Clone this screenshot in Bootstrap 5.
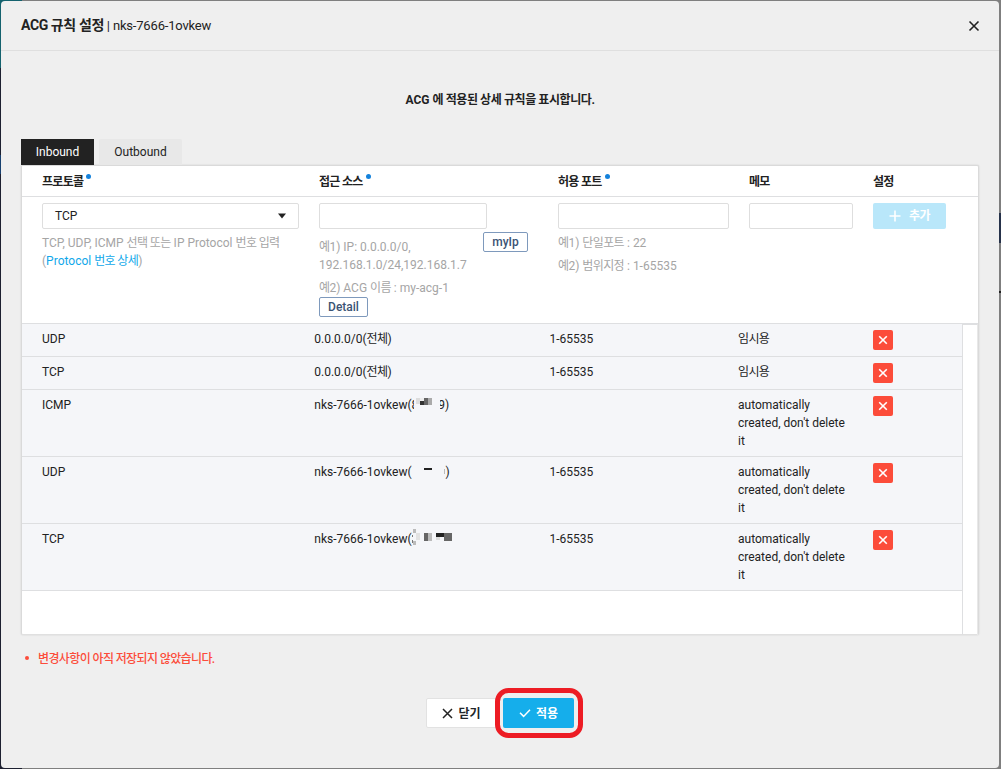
<!DOCTYPE html>
<html lang="ko">
<head>
<meta charset="utf-8">
<title>ACG 규칙 설정</title>
<link href="https://cdn.jsdelivr.net/npm/bootstrap@5.3.0/dist/css/bootstrap.min.css" rel="stylesheet">
<style>
body{font-family:Roboto,"Noto Sans CJK KR",sans-serif;font-size:12px;line-height:18px;color:#222;width:1001px;height:769px;overflow:hidden;
background:linear-gradient(#0000,#0000),linear-gradient(90deg,#14626e 22px,#7f7f7f 22px) 0 0/100% 1px no-repeat,linear-gradient(#14626e 68px,#1d2030 68px,#1d2030 155px,#17406f 155px,#17406f 174px,#1d2030 174px) 0 0/22px 100% no-repeat,linear-gradient(#7f7f7f 213px,#26324a 213px,#26324a 243px,#7f7f7f 243px,#7f7f7f 291px,#222 291px,#222 293px,#7f7f7f 293px) #7f7f7f}
.dialog-box{width:998px;height:767px;margin:1px;background:#efefef;border-radius:4px}
.dialog-head{height:50px;padding:0 18px 0 20px;border-bottom:1px solid #dfdfdf}
.dialog-head strong{font-size:14px;letter-spacing:-.4px}
.dialog-head span{font-size:13px;letter-spacing:-.18px}
.ko{letter-spacing:-.62px}
.intro{margin-top:40px;font-weight:700}
.intro .ko{letter-spacing:-.42px}
.tab-strip{margin:30px 0 0 20px;gap:5px}
.tab-strip .nav-link{height:26px;line-height:26px;padding:0;border-radius:2px 2px 0 0;text-align:center;color:#222;background:#e8e8e8;width:83px}
.tab-strip .nav-link.active{background:#222;color:#fff;width:73px;border-radius:0}
.panel{margin:0 20px;width:958px;height:470px;border:1px solid #dadada;border-bottom-color:#e0e0e0;box-shadow:0 0 2px #0002;border-radius:2px}
.cols{display:grid;grid-template-columns:277px 239px 191px 124px auto;padding-left:20px;border-bottom:1px solid #dedfe1}
.cols.caption-row{height:31px;line-height:30px;padding-top:1px;font-weight:700;letter-spacing:-.7px}
.cols.entry-row{height:127px;padding-top:6px;color:#a5a5a5}
.cols.rule{grid-template-columns:272.3px 235.2px 188.5px 135px auto;padding-top:6px;padding-bottom:6px;background:#f5f6f9}
.dot{display:inline-block;width:5px;height:5px;border-radius:50%;background:#1482dc;vertical-align:7px;margin-left:3px}
.entry-row .form-control{height:26px;border:1px solid #dedede;border-radius:2px;padding:0 12px;font-size:12px;line-height:24px;color:#222}
.pick{background:#fff;width:257px}
.hint{line-height:18px}
.outline{height:20px;border:1px solid #7e99bc;border-radius:2px;color:#3b5374;font-weight:500;font-size:12px;line-height:18px;padding:0;background:#fff}
.add{width:73px;height:26px;background:#b9e7fa;color:#fff;border-radius:2px;font-weight:700;font-size:12px;padding:0;border:0}
.del{width:20px;height:20px;border-radius:2px;background:#fc4c3a;border:0;padding:0}
.memo{width:112px}
.rules{height:311px}
.gutter{width:16px;border-left:1px solid #dedfe1;border-right:1px solid #e8e8e8;border-top:1px solid #dedfe1}
.notice{margin:15px 0 0 24px;color:#fc4c3a;gap:9px;font-weight:500}
.notice i{width:4px;height:4px;border-radius:50%;background:#fc4c3a;margin-bottom:2px}
.foot{margin:30px 0 0 425px;font-weight:700}
.foot .btn{font-size:12px;font-weight:700;border-radius:2px;padding:1px 0 0;height:30px;line-height:30px}
.close-btn{width:71px;background:#fff;border:1px solid #e2e2e2}
.apply-btn{width:71px;background:#15aeeb;color:#fff;border:0}
.foot .btn svg{margin-bottom:1px}
.ring{left:68px;top:-10px}
.mask{position:absolute;left:97px;top:-1px}
</style>
</head>
<body>
<div class="dialog-box">
  <div class="dialog-head d-flex align-items-center justify-content-between">
    <div class="text-nowrap"><strong>ACG 규칙 설정</strong> <span>| nks-7666-1ovkew</span></div>
    <svg width="14" height="14" viewBox="0 0 14 14" stroke="#222" stroke-width="1.6"><path d="M2.5 2.5l9 9m0-9l-9 9"/></svg>
  </div>
  <div class="intro text-center">ACG <span class="ko">에 적용된 상세 규칙을 표시합니다.</span></div>
  <nav class="nav tab-strip"><a class="nav-link active">Inbound</a><a class="nav-link">Outbound</a></nav>
  <div class="panel bg-white">
    <div class="cols caption-row"><div>프로토콜<span class="dot"></span></div><div>접근 소스<span class="dot"></span></div><div>허용 포트<span class="dot"></span></div><div>메모</div><div>설정</div></div>
    <div class="cols entry-row">
      <div>
        <div class="form-control pick d-flex justify-content-between align-items-center"><span>TCP</span><svg width="8" height="6"><path d="M0 .5h8L4 5.5z" fill="#222"/></svg></div>
        <div class="hint text-nowrap" style="margin-top:5px">TCP, UDP, ICMP <span class="ko">선택 또는</span> IP Protocol <span class="ko">번호 입력</span><br>(<span style="color:#10a8ea">Protocol <span class="ko">번호 상세</span></span>)</div>
      </div>
      <div>
        <input class="form-control" style="width:168px">
        <div class="d-flex"><div class="hint" style="width:164px;margin-top:9px"><span class="ko">예</span>1) IP: 0.0.0.0/0,<br>192.168.1.0/24,192.168.1.7</div><button class="btn outline" style="width:45px;margin-top:3px">myIp</button></div>
        <div class="hint" style="margin-top:5px"><span class="ko">예</span>2) ACG <span class="ko">이름</span> : my-acg-1</div>
        <button class="btn outline d-block" style="width:49px">Detail</button>
      </div>
      <div>
        <input class="form-control" style="width:171px">
        <div class="hint" style="margin-top:5px"><span class="ko">예</span>1) <span class="ko">단일포트</span> : 22</div>
        <div class="hint" style="margin-top:5px"><span class="ko">예</span>2) <span class="ko">범위지정</span> : 1-65535</div>
      </div>
      <div><input class="form-control" style="width:104px"></div>
      <div><button class="btn add d-flex align-items-center justify-content-center"><svg width="12" height="12" stroke="#fff" stroke-width="1.6" style="margin-right:8px"><path d="M6 .5v11M.5 6h11"/></svg><span class="ko">추가</span></button></div>
    </div>
    <div class="d-flex rules">
      <div class="flex-grow-1">
        <div class="cols rule"><div>UDP</div><div>0.0.0.0/0(<span class="ko">전체</span>)</div><div>1-65535</div><div class="ko">임시용</div><button class="btn del d-flex"><svg width="20" height="20" stroke="#fff" stroke-width="1.6"><path d="M6.2 6.2l7.6 7.6m0-7.6l-7.6 7.6"/></svg></button></div>
        <div class="cols rule"><div>TCP</div><div>0.0.0.0/0(<span class="ko">전체</span>)</div><div>1-65535</div><div class="ko">임시용</div><button class="btn del d-flex"><svg width="20" height="20" stroke="#fff" stroke-width="1.6"><path d="M6.2 6.2l7.6 7.6m0-7.6l-7.6 7.6"/></svg></button></div>
        <div class="cols rule"><div>ICMP</div><div class="position-relative">nks-7666-1ovkew(8<span style="margin-left:20px">9)</span>
          <svg class="mask" width="46" height="18"><path fill="#f5f6f9" d="M3 0h26v18H3z"/><path fill="#ddd" d="M5 3h4v6H5z"/><path fill="#eee" d="M9 3h4v3H9z"/><path fill="#333" d="M9 6h4v4H9z"/><path fill="#666" d="M13 3h4v7h-4z"/><path fill="#aaa" d="M17 3h4v7h-4z"/></svg></div><div></div><div class="memo">automatically created, don't delete it</div><button class="btn del d-flex"><svg width="20" height="20" stroke="#fff" stroke-width="1.6"><path d="M6.2 6.2l7.6 7.6m0-7.6l-7.6 7.6"/></svg></button></div>
        <div class="cols rule"><div>UDP</div><div class="position-relative">nks-7666-1ovkew(<span style="margin-left:34px">)</span>
          <svg class="mask" width="46" height="18"><path fill="#222" d="M13 6h8v2h-8z"/><path fill="#bbb" d="M33 7h1v5h-1z"/></svg></div><div>1-65535</div><div class="memo">automatically created, don't delete it</div><button class="btn del d-flex"><svg width="20" height="20" stroke="#fff" stroke-width="1.6"><path d="M6.2 6.2l7.6 7.6m0-7.6l-7.6 7.6"/></svg></button></div>
        <div class="cols rule"><div>TCP</div><div class="position-relative">nks-7666-1ovkew(
          <svg class="mask" width="46" height="18"><path fill="#777" d="M1 6h1v2H1zM1 11h1v3H1z"/><path fill="#bbb" d="M2 0h3v4H2zM2 12h3v4H2z"/><path fill="#e2e2e2" d="M5 4h4v7H5z"/><path fill="#666" d="M13 4h4v8h-4z"/><path fill="#bbb" d="M17 4h4v8h-4z"/><path fill="#222" d="M25 4h8v4h-8z"/><path fill="#666" d="M33 4h8v8h-8z"/><path fill="#ddd" d="M25 8h4v3h-4z"/></svg></div><div>1-65535</div><div class="memo">automatically created, don't delete it</div><button class="btn del d-flex"><svg width="20" height="20" stroke="#fff" stroke-width="1.6"><path d="M6.2 6.2l7.6 7.6m0-7.6l-7.6 7.6"/></svg></button></div>
      </div>
      <div class="gutter"></div>
    </div>
  </div>
  <div class="notice d-flex align-items-center"><i></i><span class="ko">변경사항이 아직 저장되지 않았습니다.</span></div>
  <div class="foot d-flex position-relative">
    <button class="btn close-btn d-flex align-items-center justify-content-center"><svg width="11" height="11" stroke="#222" stroke-width="1.5" style="margin-right:5px"><path d="M1 1l9 9m0-9l-9 9"/></svg>닫기</button>
    <button class="btn apply-btn d-flex align-items-center justify-content-center" style="margin-left:6px"><svg width="12" height="10" fill="none" stroke="#fff" stroke-width="1.5" style="margin-right:5px"><path d="M1 4.8l3.6 3.6L11 1.8"/></svg>적용</button>
    <svg class="ring position-absolute" width="90" height="50" fill="none" stroke="#ed1c24" stroke-width="5"><rect x="3.5" y="2.5" width="83" height="45" rx="11"/></svg>
  </div>
</div>
<script src="https://cdn.jsdelivr.net/npm/bootstrap@5.3.0/dist/js/bootstrap.bundle.min.js"></script>
</body>
</html>
